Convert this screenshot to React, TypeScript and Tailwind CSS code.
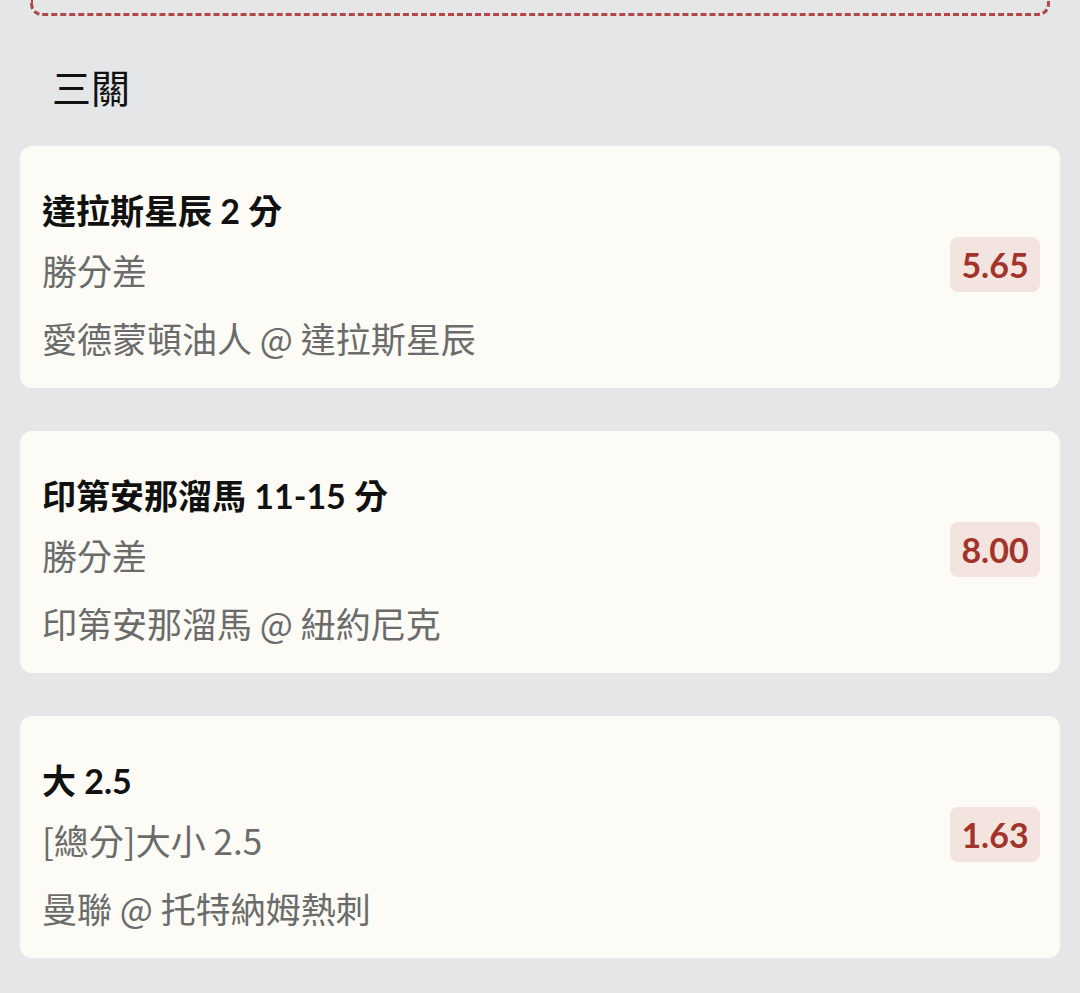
const font = { fontFamily: 'Lato, "Noto Sans CJK TC", sans-serif' };
const cjk = { fontFamily: '"Noto Sans CJK TC", sans-serif' };

interface Leg {
  pick: string;
  market: string;
  match: string;
  odds: string;
}

const legs: Leg[] = [
  { pick: "達拉斯星辰 2 分", market: "勝分差", match: "愛德蒙頓油人 @ 達拉斯星辰", odds: "5.65" },
  { pick: "印第安那溜馬 11-15 分", market: "勝分差", match: "印第安那溜馬 @ 紐約尼克", odds: "8.00" },
  { pick: "大 2.5", market: "[總分]大小 2.5", match: "曼聯 @ 托特納姆熱刺", odds: "1.63" },
];

const LegCard = ({ leg }: { leg: Leg }) => (
  <div className="flex justify-between rounded-[12px] bg-[#fcfbf5] pl-[22px] pr-[20px] pt-[40px] pb-[24px]">
    <div className="flex flex-col">
      <div className="text-[34px] leading-[50px] font-bold text-[#111111]">{leg.pick}</div>
      <div className="text-[35px] leading-[52px] mt-[8px] text-[#6b6b6b]" style={cjk}>{leg.market}</div>
      <div className="text-[35px] leading-[52px] mt-[16px] text-[#6b6b6b]" style={cjk}>{leg.match}</div>
    </div>
    {/* odds badge sits slightly above the card's middle */}
    <div className="mt-[51px] flex h-[55px] w-[90px] items-center justify-center self-start rounded-[8px] bg-[#f3e4df] text-[34px] font-bold text-[#a3342b]">
      {leg.odds}
    </div>
  </div>
);

export default function App() {
  return (
    <div className="min-h-[993px] w-[1080px] bg-[#e5e6e8]" style={font}>
      <div className="mx-[30px] h-[16px] rounded-b-[12px] border-[3px] border-t-0 border-dashed border-[#b24646]" />
      <div className="pl-[52px] pt-[48px] pb-[38px] text-[39px] leading-[44px] text-[#111111]" style={cjk}>三關</div>
      <div className="flex flex-col gap-[43px] px-[20px]">
        {legs.map((leg) => (
          <LegCard key={leg.pick} leg={leg} />
        ))}
      </div>
    </div>
  );
}
